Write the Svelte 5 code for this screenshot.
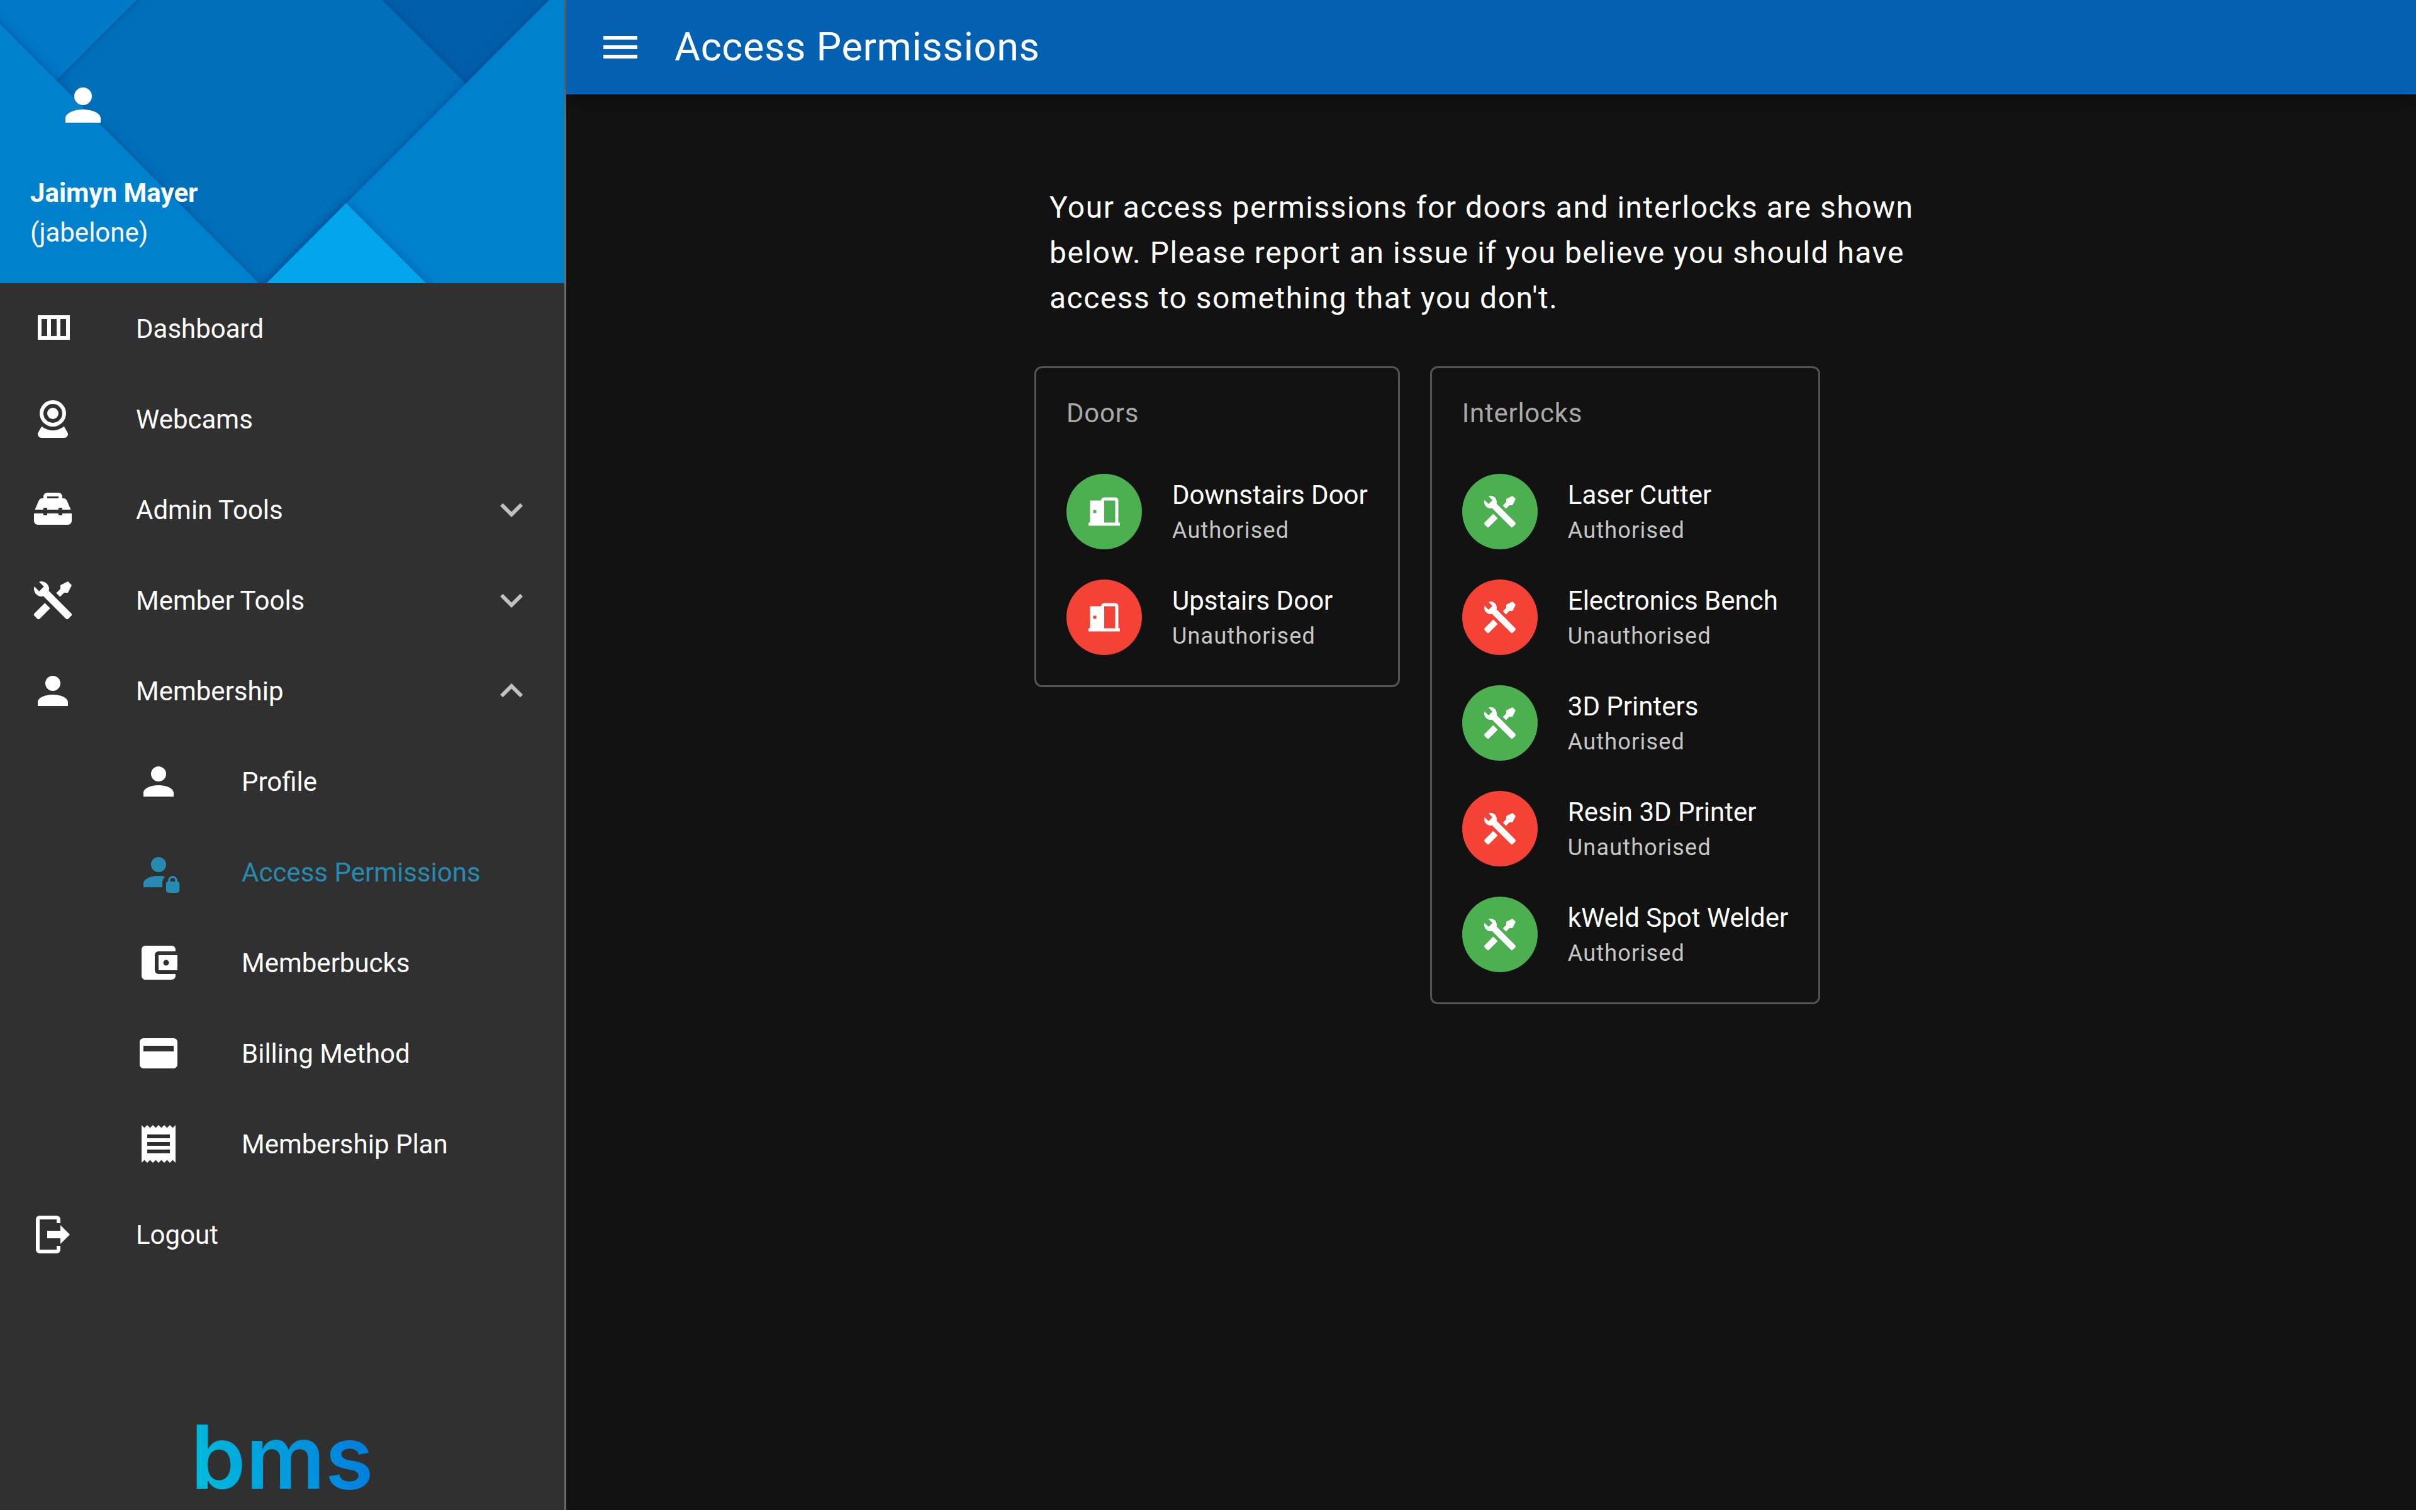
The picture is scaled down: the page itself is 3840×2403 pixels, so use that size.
<script lang="ts">
  const icons: Record<string, string> = {
    menu: 'M3 6h18v2H3zM3 11h18v2H3zM3 16h18v2H3z',
    columns: 'M4 5v13h17V5zM6 7h3v9H6zM11 7h3v9h-3zM16 7h3v9h-3z',
    webcam:
      'M12,2A7,7 0 0,1 19,9A7,7 0 0,1 12,16A7,7 0 0,1 5,9A7,7 0 0,1 12,2M12,4A5,5 0 0,0 7,9A5,5 0 0,0 12,14A5,5 0 0,0 17,9A5,5 0 0,0 12,4M12,6A3,3 0 0,1 15,9A3,3 0 0,1 12,12A3,3 0 0,1 9,9A3,3 0 0,1 12,6M6,22A2,2 0 0,1 4,20C4,19.62 4.1,19.27 4.29,18.97L6.11,15.81C7.69,17.17 9.75,18 12,18C14.25,18 16.31,17.17 17.89,15.81L19.71,18.97C19.9,19.27 20,19.62 20,20A2,2 0 0,1 18,22H6Z',
    toolbox:
      'M9 3h6a2 2 0 0 1 2 2v1h.6c.9 0 1.6.5 1.9 1.3L21.5 12H17v-1h-2v1H9v-1H7v1H2.5l2-4.7C4.8 6.5 5.5 6 6.4 6H7V5a2 2 0 0 1 2-2zM9 5v1h6V5zM2 14h5v1h2v-1h6v1h2v-1h5v4a2 2 0 0 1-2 2H4a2 2 0 0 1-2-2z',
    tools:
      'M21.71 20.29L20.29 21.71A1 1 0 0 1 18.88 21.71L7 9.85A3.81 3.81 0 0 1 6 10A4 4 0 0 1 2.22 4.7L4.76 7.24L5.29 6.71L6.71 5.29L7.24 4.76L4.7 2.22A4 4 0 0 1 10 6A3.81 3.81 0 0 1 9.85 7L21.71 18.88A1 1 0 0 1 21.71 20.29M2.29 18.88A1 1 0 0 0 2.29 20.29L3.71 21.71A1 1 0 0 0 5.12 21.71L10.59 16.25L7.76 13.42M20 2L16 4V6L13.83 8.17L15.83 10.17L18 8H20L22 4Z',
    person:
      'M12,4A4,4 0 0,1 16,8A4,4 0 0,1 12,12A4,4 0 0,1 8,8A4,4 0 0,1 12,4M12,14C16.42,14 20,15.79 20,18V20H4V18C4,15.79 7.58,14 12,14Z',
    personLock:
      'M12 4a4 4 0 1 1 0 8a4 4 0 0 1 0-8zM12 14c1.2 0 2.4.1 3.4.4c-.9.9-1.4 2.1-1.4 3.4V20H4v-2c0-2.21 3.58-4 8-4zM17 17v-.5a2.5 2.5 0 0 1 5 0v.5c.6.1 1.1.6 1.1 1.2v3.5c0 .7-.6 1.3-1.3 1.3h-4.5c-.7 0-1.3-.6-1.3-1.3v-3.5c0-.6.4-1.1 1-1.2zM18.2 17h2.6v-.5a1.3 1.3 0 0 0-2.6 0z',
    wallet:
      'M21,18V19A2,2 0 0,1 19,21H5C3.89,21 3,20.1 3,19V5A2,2 0 0,1 5,3H19A2,2 0 0,1 21,5V6H12C10.89,6 10,6.9 10,8V16A2,2 0 0,0 12,18M12,16H22V8H12M16,13.5A1.5,1.5 0 0,1 14.5,12A1.5,1.5 0 0,1 16,10.5A1.5,1.5 0 0,1 17.5,12A1.5,1.5 0 0,1 16,13.5Z',
    card: 'M4 4h16a2 2 0 0 1 2 2v12a2 2 0 0 1-2 2H4a2 2 0 0 1-2-2V6a2 2 0 0 1 2-2zM4 8h16v3H4z',
    receipt:
      'M3,22L4.5,20.5L6,22L7.5,20.5L9,22L10.5,20.5L12,22L13.5,20.5L15,22L16.5,20.5L18,22L19.5,20.5L21,22V2L19.5,3.5L18,2L16.5,3.5L15,2L13.5,3.5L12,2L10.5,3.5L9,2L7.5,3.5L6,2L4.5,3.5L3,2M18,9H6V7H18M18,13H6V11H18M18,17H6V15H18V17Z',
    logout:
      'M5 2h9a2 2 0 0 1 2 2v2h-2V4H5v16h9v-2h2v2a2 2 0 0 1-2 2H5a2 2 0 0 1-2-2V4a2 2 0 0 1 2-2zM16 7l5 5-5 5v-3H9v-4h7z',
    door: 'M12,3C10.89,3 10,3.89 10,5H3V19H2V21H22V19H21V5C21,3.89 20.11,3 19,3H12M12,5H19V19H12V5M5,11H7V13H5V11Z',
    down: 'M7.41 8.59 12 13.17l4.59-4.58L18 10l-6 6-6-6z',
    up: 'M7.41 15.41 12 10.83l4.59 4.58L18 14l-6-6-6 6z'
  };

  let open = $state<Record<string, boolean>>({ Membership: true });

  type Item = { label: string; icon: string; group?: boolean; children?: { label: string; icon: string; active?: boolean }[] };
  const nav: Item[] = [
    { label: 'Dashboard', icon: 'columns' },
    { label: 'Webcams', icon: 'webcam' },
    { label: 'Admin Tools', icon: 'toolbox', group: true },
    { label: 'Member Tools', icon: 'tools', group: true },
    {
      label: 'Membership',
      icon: 'person',
      group: true,
      children: [
        { label: 'Profile', icon: 'person' },
        { label: 'Access Permissions', icon: 'personLock', active: true },
        { label: 'Memberbucks', icon: 'wallet' },
        { label: 'Billing Method', icon: 'card' },
        { label: 'Membership Plan', icon: 'receipt' }
      ]
    },
    { label: 'Logout', icon: 'logout' }
  ];

  const cards = [
    {
      title: 'Doors',
      icon: 'door',
      items: [
        { name: 'Downstairs Door', ok: true },
        { name: 'Upstairs Door', ok: false }
      ]
    },
    {
      title: 'Interlocks',
      icon: 'tools',
      items: [
        { name: 'Laser Cutter', ok: true },
        { name: 'Electronics Bench', ok: false },
        { name: '3D Printers', ok: true },
        { name: 'Resin 3D Printer', ok: false },
        { name: 'kWeld Spot Welder', ok: true }
      ]
    }
  ];
</script>

{#snippet icon(name: string)}
  <svg class="icon" viewBox="0 0 24 24" aria-hidden="true"><path fill-rule="evenodd" d={icons[name]} /></svg>
{/snippet}

<div class="layout">
  <aside class="drawer">
    <div class="profile">
      <svg class="art" viewBox="0 0 897 450" preserveAspectRatio="xMidYMid slice" aria-hidden="true">
        <defs>
          <filter id="lift" x="-20%" y="-20%" width="140%" height="140%">
            <feDropShadow dx="0" dy="0" stdDeviation="8" flood-color="#003a80" flood-opacity="0.6" />
          </filter>
        </defs>
        <rect width="897" height="450" fill="#005fab" />
        <polygon filter="url(#lift)" fill="#0070bb" points="-60,-20 587,-20 740,133 740,500 -60,500" />
        <polygon filter="url(#lift)" fill="#0079c8" points="-60,-20 237,-20 60,157 -60,157" />
        <polygon filter="url(#lift)" fill="#0081ce" points="-60,-22 461,500 -60,500" />
        <polygon filter="url(#lift)" fill="#0081ce" points="893,-20 960,-20 960,500 374,500" />
        <polygon filter="url(#lift)" fill="#00a5ec" points="550,323 727,500 374,500" />
      </svg>
      <div class="who">
        <span class="avatar-lg">{@render icon('person')}</span>
        <strong>Jaimyn Mayer</strong>
        <span>(jabelone)</span>
      </div>
    </div>

    <nav aria-label="Main">
      {#each nav as item}
        {#if item.group}
          <button
            class="row"
            type="button"
            aria-expanded={!!open[item.label]}
            onclick={() => (open[item.label] = !open[item.label])}
          >
            <span class="side">{@render icon(item.icon)}</span>
            <span class="label">{item.label}</span>
            <span class="chevron">{@render icon(open[item.label] ? 'up' : 'down')}</span>
          </button>
          {#if open[item.label] && item.children}
            <div class="sub">
              {#each item.children as child}
                <a class="row" class:active={child.active} href="#top" aria-current={child.active ? 'page' : undefined}>
                  <span class="side">{@render icon(child.icon)}</span>
                  <span class="label">{child.label}</span>
                </a>
              {/each}
            </div>
          {/if}
        {:else}
          <a class="row" href="#top">
            <span class="side">{@render icon(item.icon)}</span>
            <span class="label">{item.label}</span>
          </a>
        {/if}
      {/each}
    </nav>

    <div class="brand"><span>bms</span></div>
  </aside>

  <div class="page">
    <header>
      <button class="menu" type="button" aria-label="Menu">{@render icon('menu')}</button>
      <h1>Access Permissions</h1>
    </header>

    <main>
      <p>
        Your access permissions for doors and interlocks are shown below. Please report an issue if you believe you
        should have access to something that you don't.
      </p>
      <div class="cards">
        {#each cards as card}
          <section class="card">
            <h2>{card.title}</h2>
            <ul>
              {#each card.items as item}
                <li>
                  <span class="avatar" class:ok={item.ok}>{@render icon(card.icon)}</span>
                  <div class="text">
                    <span class="name">{item.name}</span>
                    <span class="state">{item.ok ? 'Authorised' : 'Unauthorised'}</span>
                  </div>
                </li>
              {/each}
            </ul>
          </section>
        {/each}
      </div>
    </main>
  </div>
</div>

<style>
  :global(body) {
    margin: 0;
    background: #fff;
  }

  .layout {
    display: flex;
    min-height: calc(100vh - 3px);
    background: #121212;
    color: #fff;
    font-family: Roboto, 'Noto Sans', sans-serif;
    font-size: 42px;
    line-height: 63px;
  }

  .icon {
    display: block;
    width: 72px;
    height: 72px;
    fill: currentColor;
  }

  .drawer {
    box-sizing: border-box;
    flex: 0 0 900px;
    display: flex;
    flex-direction: column;
    background: #303030;
    border-right: 3px solid #6c6c6c;
  }

  .profile {
    position: relative;
    display: flex;
    align-items: flex-end;
    height: 450px;
    overflow: hidden;
  }

  .art {
    position: absolute;
    inset: 0;
    width: 100%;
    height: 100%;
  }

  .who {
    position: relative;
    display: flex;
    flex-direction: column;
    padding: 0 48px 49px;
  }

  .avatar-lg {
    display: grid;
    place-items: center;
    width: 168px;
    height: 168px;
    margin-bottom: 24px;
  }

  .avatar-lg .icon {
    width: 84px;
    height: 84px;
  }

  .row {
    box-sizing: border-box;
    display: flex;
    align-items: center;
    width: 100%;
    height: 144px;
    padding: 0 48px;
    border: 0;
    background: none;
    color: #fff;
    font: inherit;
    text-align: left;
    text-decoration: none;
    cursor: pointer;
  }

  .side {
    flex: 0 0 168px;
  }

  .label {
    flex: 1;
  }

  .chevron {
    color: #c1c1c1;
  }

  .sub .row {
    padding-left: 216px;
  }

  .row.active {
    color: #278ab0;
  }

  .brand {
    margin-top: auto;
    text-align: center;
    font: 600 140px/170px Inter, sans-serif;
  }

  .brand span {
    background: linear-gradient(75deg, #00c0dc, #0077de);
    background-clip: text;
    -webkit-background-clip: text;
    color: transparent;
  }

  .page {
    flex: 1;
    min-width: 0;
  }

  header {
    display: flex;
    align-items: center;
    height: 150px;
    padding: 0 36px;
    background: #0461b2;
    box-shadow: 0 0 30px 6px rgba(0, 0, 0, 0.3);
  }

  .menu {
    display: grid;
    place-items: center;
    width: 100px;
    height: 100px;
    padding: 0;
    border: 0;
    background: none;
    color: #fff;
  }

  h1 {
    margin: 0;
    padding: 0 36px;
    font-size: 63px;
    font-weight: 400;
    line-height: 96px;
    letter-spacing: 0.01em;
  }

  main {
    max-width: 1500px;
    margin: 0 auto;
    padding-top: 96px;
  }

  p {
    margin: 0;
    padding: 48px;
    font-size: 48px;
    line-height: 72px;
    letter-spacing: 0.03125em;
  }

  .cards {
    display: flex;
    align-items: flex-start;
    gap: 48px;
    padding: 24px;
  }

  .card {
    padding-bottom: 24px;
    border: 3px solid #545454;
    border-radius: 12px;
  }

  h2 {
    margin: 0;
    padding: 48px;
    color: #a9a9a9;
    font-size: 42px;
    font-weight: 400;
    line-height: 48px;
    letter-spacing: 0.01786em;
  }

  ul {
    margin: 0;
    padding: 0;
    list-style: none;
  }

  li {
    display: flex;
    align-items: center;
    gap: 48px;
    padding: 24px 48px;
  }

  .avatar {
    display: grid;
    place-items: center;
    width: 120px;
    height: 120px;
    border-radius: 50%;
    background: #f44336;
  }

  .avatar.ok {
    background: #4caf50;
  }

  .avatar .icon {
    width: 60px;
    height: 60px;
  }

  .text {
    display: flex;
    flex-direction: column;
    gap: 12px;
  }

  .name {
    line-height: 48px;
  }

  .state {
    color: #c6c6c6;
    font-size: 36px;
    line-height: 40px;
    letter-spacing: 0.03333em;
  }
</style>
